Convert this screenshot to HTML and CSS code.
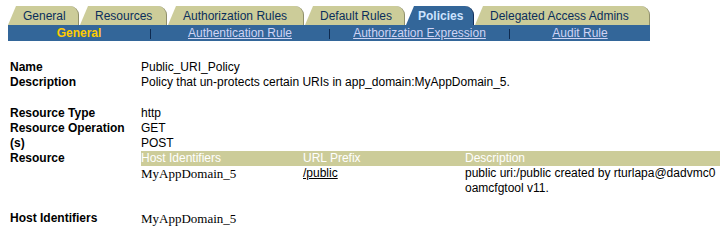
FILE: index.html
```html
<!DOCTYPE html>
<html>
<head>
<meta charset="utf-8">
<title>Policies</title>
<link rel="stylesheet" href="styles.css">
</head>
<body>
<div class="page">
  <div class="tabs">
    <div class="tab t-general">General</div>
    <div class="tab t-resources">Resources</div>
    <div class="tab t-authz">Authorization Rules</div>
    <div class="tab t-default">Default Rules</div>
    <div class="tab tab-active t-policies">Policies</div>
    <div class="tab t-delegated">Delegated Access Admins</div>
  </div>
  <div class="subnav">
    <div class="subcell c1"><span class="sub-current">General</span></div>
    <div class="sep"></div>
    <div class="subcell c2"><a class="sub-link" href="#">Authentication Rule</a></div>
    <div class="sep"></div>
    <div class="subcell c3"><a class="sub-link" href="#">Authorization Expression</a></div>
    <div class="sep"></div>
    <div class="subcell c4"><a class="sub-link" href="#">Audit Rule</a></div>
  </div>

  <div class="details">
    <div class="label">Name</div>
    <div class="value">Public_URI_Policy</div>
    <div class="label">Description</div>
    <div class="value">Policy that un-protects certain URIs in app_domain:MyAppDomain_5.</div>

    <div class="spacer"></div>

    <div class="label">Resource Type</div>
    <div class="value">http</div>
    <div class="label">Resource Operation (s)</div>
    <div class="value">GET<br>POST</div>
    <div class="label">Resource</div>
    <div class="value">
      <div class="res-table">
        <div class="th">Host Identifiers</div>
        <div class="th">URL Prefix</div>
        <div class="th">Description</div>
        <div class="td serif">MyAppDomain_5</div>
        <div class="td"><a class="plain-link" href="#">/public</a></div>
        <div class="td nowrap">public uri:/public created by rturlapa@dadvmc0<br>oamcfgtool v11.</div>
      </div>
    </div>

    <div class="spacer2"></div>

    <div class="label">Host Identifiers</div>
    <div class="value serif">MyAppDomain_5</div>
  </div>
</div>
</body>
</html>
```

FILE: styles.css
```css
html, body {
  margin: 0;
  padding: 0;
  background: #ffffff;
}

body {
  font-family: "Liberation Sans", Arial, sans-serif;
  font-size: 12px;
  color: #000000;
}

.page {
  padding: 6px 0 0 8px;
  overflow: hidden;
  height: 234px;
}

/* ---------- tabs ---------- */
.tabs {
  display: flex;
  gap: 1px;
  height: 19px;
  width: 642px;
}

.tab {
  box-sizing: border-box;
  height: 19px;
  padding-left: 15px;
  display: flex;
  align-items: center;
  padding-top: 1px;
  background: #cccc99;
  color: #0a2e5c;
  border-right: 1px solid #8f8f6a;
  border-top-right-radius: 9px;
  clip-path: polygon(0 100%, 8px 0, 100% 0, 100% 100%);
  white-space: nowrap;
}

.t-general { width: 71px; }
.t-resources { width: 87px; }
.t-authz { width: 136px; }
.t-default { width: 100px; }
.t-policies { width: 68px; padding-left: 12px; }
.t-delegated { width: 175px; }

.tab-active {
  background: #336699;
  color: #cce3ff;
  font-weight: bold;
  border-right-color: #13305c;
}

/* ---------- sub navigation ---------- */
.subnav {
  display: flex;
  align-items: center;
  width: 642px;
  height: 16px;
  background: #336699;
}

.subcell {
  display: flex;
  justify-content: center;
  align-items: center;
  height: 16px;
}

.c1 { width: 142px; }
.c2 { width: 178px; }
.c3 { width: 179px; }
.c4 { flex: 1; }

.sep {
  width: 1px;
  height: 10px;
  background: #0e2a50;
  margin-top: 2px;
}

.sub-current {
  color: #ffcc00;
  font-weight: bold;
}

.sub-link {
  color: #cfd3f5;
  text-decoration: underline;
}

/* ---------- details ---------- */
.details {
  display: grid;
  grid-template-columns: 131px 1fr;
  margin-top: 19px;
  margin-left: 2px;
  line-height: 15px;
}

.label {
  font-weight: bold;
  padding-right: 13px;
}

.value {
  min-width: 0;
}

.spacer {
  grid-column: 1 / -1;
  height: 16px;
}

.spacer2 {
  grid-column: 1 / -1;
  height: 15px;
}

.serif {
  font-family: "Liberation Serif", "Times New Roman", serif;
  font-size: 13px;
}

.res-table {
  display: grid;
  grid-template-columns: 162px 162px 300px;
  width: 624px;
}

.th {
  background: #cccc99;
  color: #ffffff;
  height: 15px;
}

.td {
  line-height: 15px;
}

.nowrap {
  white-space: nowrap;
}

.plain-link {
  color: #000000;
  text-decoration: underline;
}
```
